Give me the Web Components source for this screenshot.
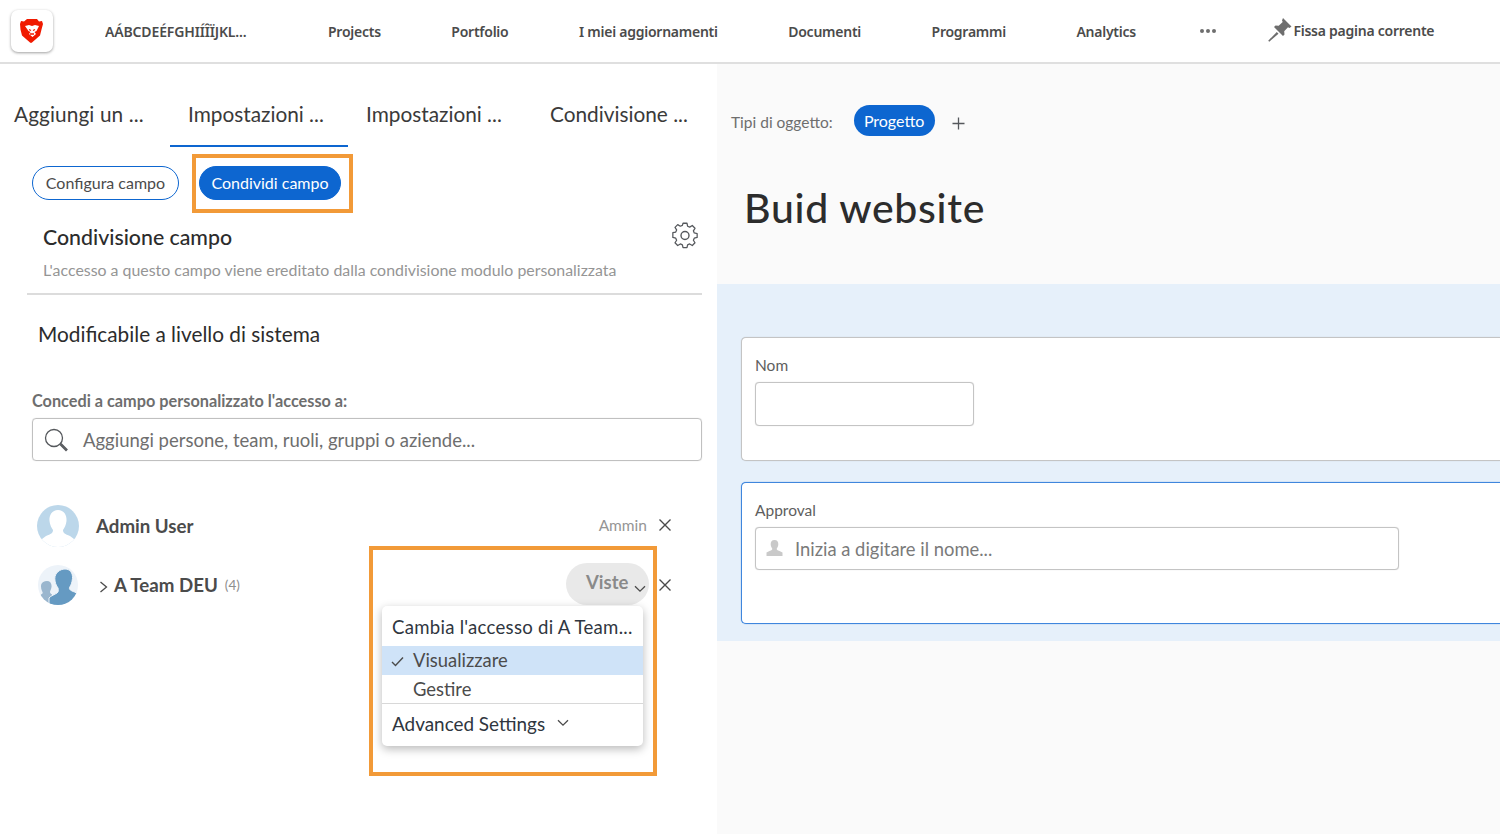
<!DOCTYPE html>
<html lang="it">
<head>
<meta charset="utf-8">
<title>Buid website</title>
<style>
html, body { margin: 0; padding: 0; height: 100%; overflow: hidden; background: #fff; }
body { font-family: Lato, "Liberation Sans", sans-serif; color: #2c2c2c; }
</style>
</head>
<body>
<app-shell></app-shell>
<script>
const ICONS = {
  x: '<svg width="14" height="14" viewBox="0 0 14 14"><path d="M1.500 1.500l11 11M12.500 1.500l-11 11" stroke="#4b4b4b" stroke-width="1.400" fill="none"/></svg>',
  chevronDown: '<svg width="12" height="8" viewBox="0 0 12 8"><path d="M1 1.200l5 5 5-5" stroke="#4b4b4b" stroke-width="1.300" fill="none"/></svg>'
};

customElements.define('top-bar', class extends HTMLElement {
  constructor() {
    super();
    this.attachShadow({ mode: 'open' });
    this.shadowRoot.innerHTML = `
<style>
:host { display: flex; align-items: center; height: 62px; border-bottom: 2px solid #dfdfdf; background: #fff; box-sizing: content-box; font-family: "Noto Sans", "Open Sans", sans-serif; }
.logo { width: 42px; height: 42px; margin-left: 11px; border-radius: 7px; background: #fff; box-shadow: 0 1px 3px rgba(0,0,0,.38); display: flex; align-items: center; justify-content: center; flex: none; }
nav { display: flex; align-items: center; gap: 70.500px; margin-left: 92px; }
a { font-size: 14px; font-weight: 600; color: #4b4b4b; white-space: nowrap; letter-spacing: -.25px; }
.org { width: 142px; margin-left: 52px; margin-right: -11px; flex: none; overflow: hidden; letter-spacing: -.15px; }
.more { display: flex; gap: 2px; margin-left: -6px; }
.more i { width: 4px; height: 4px; border-radius: 50%; background: #6e6e6e; }
.pin { display: flex; align-items: center; margin-left: 52px; margin-top: -2px; }
.pin svg { margin-right: 1px; }
</style>
<div class="logo">
  <svg width="24" height="26" viewBox="0 0 24 26">
    <path d="M7 1h10l2 2.500 3-.5 1 3-1.500 5.500-1.500 6-8 7-1 .5-1-.5-8-7-1.500-6L0 6l1-3 3 .5z" fill="#f01a00"/>
    <path d="M5 8l4-1 3 1 3-1 4 1-2.500 5-2 1 1.500 2-3.500 3-3.500-3 1.500-2-2-1z" fill="#fff"/>
    <path d="M9 11.500l2 1M15 11.500l-2 1M10 16h4" stroke="#f01a00" stroke-width="1.300" fill="none"/>
  </svg>
</div>
<a class="org">AÁBCDEÉFGHIÍÎÏJKL...</a>
<nav>
  <a>Projects</a>
  <a>Portfolio</a>
  <a>I miei aggiornamenti</a>
  <a>Documenti</a>
  <a>Programmi</a>
  <a>Analytics</a>
  <span class="more"><i></i><i></i><i></i></span>
</nav>
<div class="pin">
  <svg width="24" height="24" viewBox="0 0 24 24"><path d="M15 0l8.500 8.500-2 1.500-1.500-.7-3.800 4 .3 3.200-1.500 1.500L6 9l1.500-1.500 3.200.3 4-3.800L14 2.500zM8.800 14l1.700 1.700-9.200 8-1.100-1z" fill="#6e6e6e"/></svg>
  <a>Fissa pagina corrente</a>
</div>`;
  }
});

customElements.define('tab-strip', class extends HTMLElement {
  constructor() {
    super();
    this.attachShadow({ mode: 'open' });
    this.shadowRoot.innerHTML = `
<style>
:host { display: flex; height: 83px; box-sizing: border-box; padding-left: 14px; }
span { display: block; box-sizing: border-box; height: 83px; padding-top: 36px; font-size: 20.800px; line-height: 28px; color: #3a3a3a; white-space: nowrap; }
.a { width: 156px; letter-spacing: .1px; }
.b { width: 178px; padding-left: 18px; border-bottom: 2px solid #0d66d0; }
.c { width: 184px; padding-left: 18px; }
.d { padding-left: 18px; }
</style>
<span class="a">Aggiungi un ...</span>
<span class="b">Impostazioni ...</span>
<span class="c">Impostazioni ...</span>
<span class="d">Condivisione ...</span>`;
  }
});

customElements.define('pill-button', class extends HTMLElement {
  constructor() {
    super();
    this.attachShadow({ mode: 'open' });
    this.shadowRoot.innerHTML = `
<style>
:host { display: flex; align-items: center; justify-content: center; box-sizing: border-box; height: 34px; padding-bottom: 2px; border-radius: 17px; border: 1px solid #0d66d0; font-size: 16px; white-space: nowrap; color: #4b4b4b; background: #fff; }
:host([primary]) { background: #0d66d0; color: #fff; }
</style>
<slot></slot>`;
  }
});

customElements.define('access-row', class extends HTMLElement {
  constructor() {
    super();
    this.attachShadow({ mode: 'open' });
    this.shadowRoot.innerHTML = `
<style>
:host { display: flex; align-items: center; height: 42px; position: relative; }
.avatar { width: 42px; height: 42px; flex: none; margin-left: 37px; }
.name { margin-left: 17px; font-size: 18.700px; font-weight: 700; color: #4b4b4b; display: flex; align-items: center; white-space: nowrap; }
.end { margin-left: auto; display: flex; align-items: center; }
</style>
<span class="avatar"><slot name="avatar"></slot></span>
<span class="name"><slot name="caret"></slot><slot></slot></span>
<span class="end"><slot name="end"></slot></span>`;
  }
});

customElements.define('access-menu', class extends HTMLElement {
  constructor() {
    super();
    this.attachShadow({ mode: 'open' });
    this.shadowRoot.innerHTML = `
<style>
:host { display: block; position: absolute; left: 382px; top: 606px; width: 261px; height: 140px; background: #fff; border-radius: 5px; box-shadow: 0 3px 10px rgba(0,0,0,.28); font-size: 18.400px; color: #2c2c2c; z-index: 2; }
.title { height: 40px; line-height: 42px; padding-left: 10px; color: #2f3640; white-space: nowrap; font-size: 18.600px; letter-spacing: .26px; }
.item { height: 29px; line-height: 29px; padding-left: 31px; color: #4b4b4b; position: relative; }
.item + .item { height: 28px; }
.sel { background: #cfe3f8; }
.sel svg { position: absolute; left: 9px; top: 10px; }
.adv { border-top: 1px solid #d8d8d8; height: 42px; box-sizing: border-box; padding: 0 0 3px 10px; color: #2f3640; display: flex; align-items: center; gap: 12px; font-size: 18.900px; }
</style>
<div class="title">Cambia l'accesso di A Team...</div>
<div class="item sel"><svg width="13" height="11" viewBox="0 0 13 11"><path d="M1 6l3.500 3.500L12 1.500" stroke="#4b4b4b" stroke-width="1.400" fill="none"/></svg>Visualizzare</div>
<div class="item">Gestire</div>
<div class="adv">Advanced Settings ${ICONS.chevronDown}</div>`;
  }
});

customElements.define('sharing-panel', class extends HTMLElement {
  constructor() {
    super();
    this.attachShadow({ mode: 'open' });
    this.shadowRoot.innerHTML = `
<style>
:host { display: block; width: 717px; flex: none; background: #fff; box-sizing: border-box; }
.buttons { display: flex; gap: 20px; margin: 19px 0 0 32px; }
.b1 { width: 147px; }
.b2 { width: 142px; }
.head { display: flex; justify-content: space-between; align-items: flex-start; margin: 18px 18px 0 43px; height: 42px; }
h2 { margin: 5px 0 0; font-size: 21.300px; line-height: 28px; font-weight: 500; color: #2c2c2c; }
.gear { margin-top: 3px; }
.hint { margin: 0 0 0 43px; font-size: 15.900px; line-height: 20px; color: #959595; white-space: nowrap; height: 33px; }
hr { margin: 0 15px 0 27px; border: 0; border-top: 2px solid #dcdcdc; }
.sys { margin: 25px 0 0 38px; font-size: 20.800px; line-height: 28px; color: #2c2c2c; }
label { display: block; margin: 43px 0 0 32px; font-size: 16.270px; line-height: 20px; font-weight: 700; color: #6e6e6e; }
.search { margin: 7px 15px 0 32px; height: 43px; box-sizing: border-box; border: 1px solid #c0c0c0; box-shadow: 0 0 1px rgba(0,0,0,.2); border-radius: 4px; display: flex; align-items: center; font-size: 18.500px; color: #6e6e6e; }
.search svg { margin: 0 14px 0 10px; }
.rows { margin-top: 44px; display: flex; flex-direction: column; gap: 17px; margin-right: 45px; }
.role { font-size: 15.500px; color: #959595; margin: -2px 11px 0 1px; }
.pill { display: flex; align-items: center; box-sizing: border-box; width: 83px; height: 42px; margin-top: -3px; border-radius: 21px; background: #e9e9e9; color: #8a8a8a; font-size: 18.500px; font-weight: 700; padding: 0 0 4px 20px; margin-right: 9px; }
.pill svg { margin: 15px 0 0 6px; }
.close { display: flex; }
.up { margin-top: -2px; }
.count { font-size: 13.500px; font-weight: 400; color: #8e8e8e; margin-left: 7px; }
.caret { margin: 4px 6px 0 3px; }
</style>
<tab-strip></tab-strip>
<div class="buttons">
  <pill-button class="b1">Configura campo</pill-button>
  <pill-button class="b2" primary>Condividi campo</pill-button>
</div>
<div class="head">
  <h2>Condivisione campo</h2>
  <svg class="gear" width="28" height="28" viewBox="0 0 28 28" fill="none" stroke="#55585c" stroke-width="1.400" stroke-linejoin="round"><path d="M11.800 2.500h4.400l.7 3.300 2.300 1 2.900-1.800 3 3.100-1.800 2.800 1 2.400 3.200.7v4.300l-3.200.8-1 2.300 1.800 2.800-3 3-2.900-1.700-2.300 1-.7 3.200h-4.400l-.7-3.200-2.300-1-2.900 1.700-3-3 1.800-2.800-1-2.300-3.200-.8V13l3.200-.7 1-2.400-1.800-2.800 3-3.100 2.900 1.800 2.300-1z" transform="translate(1.400 0) scale(.9)"/><circle cx="14" cy="14.500" r="4"/></svg>
</div>
<p class="hint">L'accesso a questo campo viene ereditato dalla condivisione modulo personalizzata</p>
<hr>
<div class="sys">Modificabile a livello di sistema</div>
<label>Concedi a campo personalizzato l'accesso a:</label>
<div class="search">
  <svg width="26" height="26" viewBox="0 0 26 26" fill="none" stroke="#55585c" stroke-width="1.300"><circle cx="11" cy="11" r="8.500"/><path d="M17 17.500l6 6 1-1-6-6"/></svg>
  Aggiungi persone, team, ruoli, gruppi o aziende...
</div>
<div class="rows">
  <access-row>
    <svg slot="avatar" width="42" height="42" viewBox="0 0 42 42"><defs><clipPath id="c1"><circle cx="21" cy="21" r="21"/></clipPath></defs><circle cx="21" cy="21" r="21" fill="#bcd7ea"/><g clip-path="url(#c1)"><path d="M21 5c6 0 9 5 8.500 11-.4 4-2 7-3.500 9 0 3 2 4 7 6l4 3v8H5v-8l4-3c5-2 7-3 7-6-1.500-2-3.100-5-3.500-9C12 10 15 5 21 5z" fill="#fff"/></g></svg>
    Admin User
    <span slot="end" class="role">Ammin</span>
    <span slot="end" class="close up">${ICONS.x}</span>
  </access-row>
  <access-row>
    <svg slot="avatar" width="42" height="42" viewBox="0 0 42 42"><defs><clipPath id="c2"><circle cx="21" cy="21" r="20"/></clipPath></defs><circle cx="21" cy="21" r="20" fill="#edf3f9"/><g clip-path="url(#c2)"><path d="M10 17c3 0 5 2.500 4.500 6-.3 2-1.200 3.500-1.500 5 0 1 1 2 2 2.500v12H2V33c.5-1.500 2-2.500 3.500-3.500.5-1 0-1.500-.5-2.500-1-2-1.200-4.500-.8-6.500C5 18.500 7 17 10 17z" fill="#9ab6ce"/><path d="M28 5c5 0 8 4 7.500 9.500-.4 4-1.500 7-3 9-.5 2 1 3 5 4.500l4 2v13H12V34c2-2.500 6-3.500 8-5 1.500-1 1.500-3 1-5-2-2.500-3.200-6-3.200-9.500C17.800 9 23 5 28 5z" fill="#659ac2" stroke="#edf3f9" stroke-width="1"/></g></svg>
    <svg slot="caret" class="caret" width="9" height="12" viewBox="0 0 9 12"><path d="M1.500 1l6 5-6 5" stroke="#4b4b4b" stroke-width="1.300" fill="none"/></svg>
    A Team DEU<span class="count">(4)</span>
    <span slot="end" class="pill">Viste<svg width="12" height="8" viewBox="0 0 12 8"><path d="M1 1.200l5 5 5-5" stroke="#4b4b4b" stroke-width="1.300" fill="none"/></svg></span>
    <span slot="end" class="close">${ICONS.x}</span>
  </access-row>
</div>`;
  }
});

customElements.define('form-card', class extends HTMLElement {
  constructor() {
    super();
    this.attachShadow({ mode: 'open' });
    this.shadowRoot.innerHTML = `
<style>
:host { display: block; box-sizing: border-box; background: #fff; border: 1px solid #c4c4c4; border-right: 0; box-shadow: 0 0 1px rgba(0,0,0,.2); border-radius: 5px 0 0 5px; padding: 17px 0 0 13px; }
:host([active]) { border-color: #3f86dd; box-shadow: 0 0 1px #3f86dd; }
.label { font-size: 15.500px; line-height: 20px; color: #5e5e5e; margin-bottom: 7px; }
</style>
<div class="label"><slot name="label"></slot></div>
<slot></slot>`;
  }
});

customElements.define('object-canvas', class extends HTMLElement {
  constructor() {
    super();
    this.attachShadow({ mode: 'open' });
    this.shadowRoot.innerHTML = `
<style>
:host { display: block; flex: 1; min-width: 0; background: #fafafa; box-sizing: border-box; }
.types { display: flex; align-items: center; height: 30px; margin: 41px 0 0 14px; font-size: 15.500px; color: #6e6e6e; }
.lbl { padding-top: 3px; }
.tag { margin-left: 21px; height: 31px; width: 81px; border-radius: 16px; background: #0d66d0; color: #fff; font-size: 16px; display: flex; align-items: center; justify-content: center; }
.plus { margin: 6px 0 0 17px; display: flex; }
h1 { margin: 48px 0 0 27px; font-size: 41px; line-height: 50px; font-weight: 500; color: #2c2c2c; letter-spacing: .7px; }
.band { margin-top: 51px; height: 357px; background: #e6f0fa; padding: 53px 0 0 24px; box-sizing: border-box; display: flex; flex-direction: column; gap: 21px; }
.c1 { height: 124px; }
.c2 { height: 142px; }
.inp { box-sizing: border-box; height: 44px; border: 1px solid #c4c4c4; box-shadow: 0 0 1px rgba(0,0,0,.2); border-radius: 4px; background: #fff; width: 219px; }
.wide { width: 644px; height: 43px; display: flex; align-items: center; font-size: 18.400px; color: #7a7a7a; padding-left: 10px; }
.wide svg { margin-right: 12px; }
</style>
<div class="types"><span class="lbl">Tipi di oggetto:</span><span class="tag">Progetto</span>
  <span class="plus"><svg width="13" height="13" viewBox="0 0 13 13"><path d="M6.500 .5v12M.5 6.500h12" stroke="#55585c" stroke-width="1.300"/></svg></span>
</div>
<h1>Buid website</h1>
<div class="band">
  <form-card class="c1"><span slot="label">Nom</span><div class="inp"></div></form-card>
  <form-card class="c2" active><span slot="label">Approval</span>
    <div class="inp wide"><svg width="17" height="17" viewBox="0 0 17 17"><path d="M8.500 0c2.700 0 4 2 3.800 4.500-.1 1.700-.8 3.200-1.600 4.200 0 1 .8 1.500 2.300 2.100l3.500 1.700V16H.5v-3.500L4 10.800c1.500-.6 2.300-1.100 2.300-2.100-.8-1-1.500-2.500-1.600-4.200C4.500 2 5.800 0 8.500 0z" fill="#c9c9c9"/></svg>Inizia a digitare il nome...</div>
  </form-card>
</div>`;
  }
});

customElements.define('app-shell', class extends HTMLElement {
  constructor() {
    super();
    this.attachShadow({ mode: 'open' });
    this.shadowRoot.innerHTML = `
<style>
:host { display: block; position: relative; height: 834px; overflow: hidden; }
.main { display: flex; height: 770px; }
.mark { position: absolute; box-sizing: border-box; border: 4px solid #f29a38; pointer-events: none; z-index: 3; }
.m1 { left: 192px; top: 154px; width: 161px; height: 59px; }
.m2 { left: 369px; top: 546px; width: 288px; height: 230px; }
</style>
<top-bar></top-bar>
<div class="main">
  <sharing-panel></sharing-panel>
  <object-canvas></object-canvas>
</div>
<access-menu></access-menu>
<div class="mark m1"></div>
<div class="mark m2"></div>`;
  }
});
</script>
</body>
</html>
